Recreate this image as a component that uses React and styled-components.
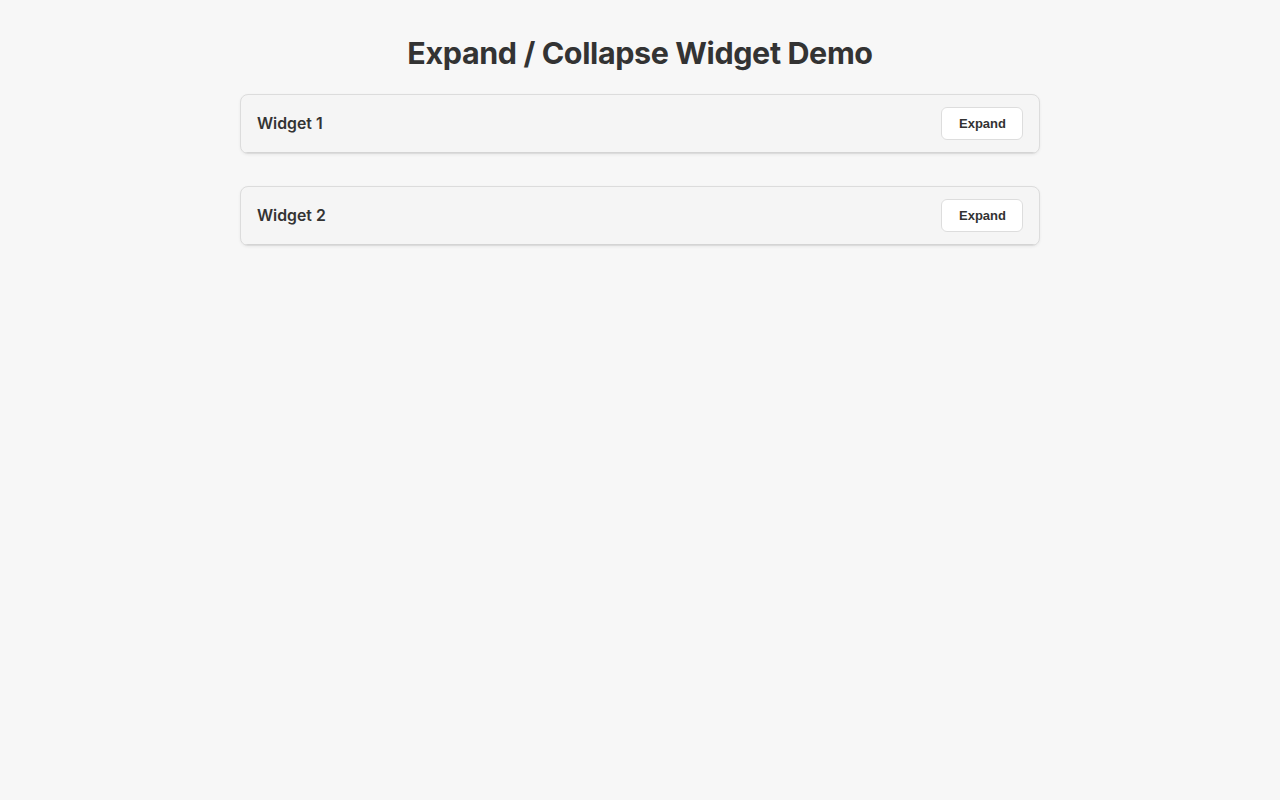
import React, { useState } from 'react'
import styled, { createGlobalStyle } from 'styled-components'

const GlobalStyle = createGlobalStyle`
  body {
    margin: 0;
    background: #f7f7f7;
    color: #333;
    font-family: Inter, 'Noto Sans', sans-serif;
  }
`;

const Page = styled.div`
  max-width: 800px;
  margin: 0 auto;
  padding: 33px 0 0;
`;

const Title = styled.h1`
  margin: 0 0 22px 0;
  font-size: 30.5px;
  line-height: 39px;
  letter-spacing: -0.4px;
  font-weight: 700;
  text-align: center;
  color: #333;
`;

const Card = styled.div`
  margin-bottom: 32px;
  border: 1px solid #dcdcdc;
  border-radius: 8px;
  background: #f5f5f5;
  box-shadow: 0 1px 3px rgba(0, 0, 0, 0.06);
  overflow: hidden;
`;

const Header = styled.div`
  display: flex;
  justify-content: space-between;
  align-items: center;
  padding: 12px 16px;
  border-bottom: 1px solid #d4d4d4;
`;

const WidgetTitle = styled.h3`
  margin: 0;
  font-size: 15.8px;
  font-weight: 600;
  color: #333;
`;

const ToggleButton = styled.button`
  padding: 8px 16px 8px 17px;
  font-family: 'Liberation Sans', Arial, sans-serif;
  font-size: 13px;
  line-height: 15px;
  font-weight: 700;
  color: #333;
  background: #fff;
  border: 1px solid #ddd;
  border-radius: 6px;
  cursor: pointer;
`;

const Body = styled.div`
  padding: 16px;
  background: #fff;
  font-size: 14px;
  line-height: 1.5;
`;

const Widget = ({ title, children }) => {
  const [open, setOpen] = useState(false)
  return (
    <Card>
      <Header>
        <WidgetTitle>{title}</WidgetTitle>
        <ToggleButton onClick={() => setOpen(!open)}>
          {open ? 'Collapse' : 'Expand'}
        </ToggleButton>
      </Header>
      {open && <Body>{children}</Body>}
    </Card>
  )
}

const App = () => {
  return (
    <Page>
      <GlobalStyle />
      <Title>Expand / Collapse Widget Demo</Title>
      <Widget title="Widget 1">This is the content of widget 1.</Widget>
      <Widget title="Widget 2">This is the content of widget 2.</Widget>
    </Page>
  )
}

export default App
